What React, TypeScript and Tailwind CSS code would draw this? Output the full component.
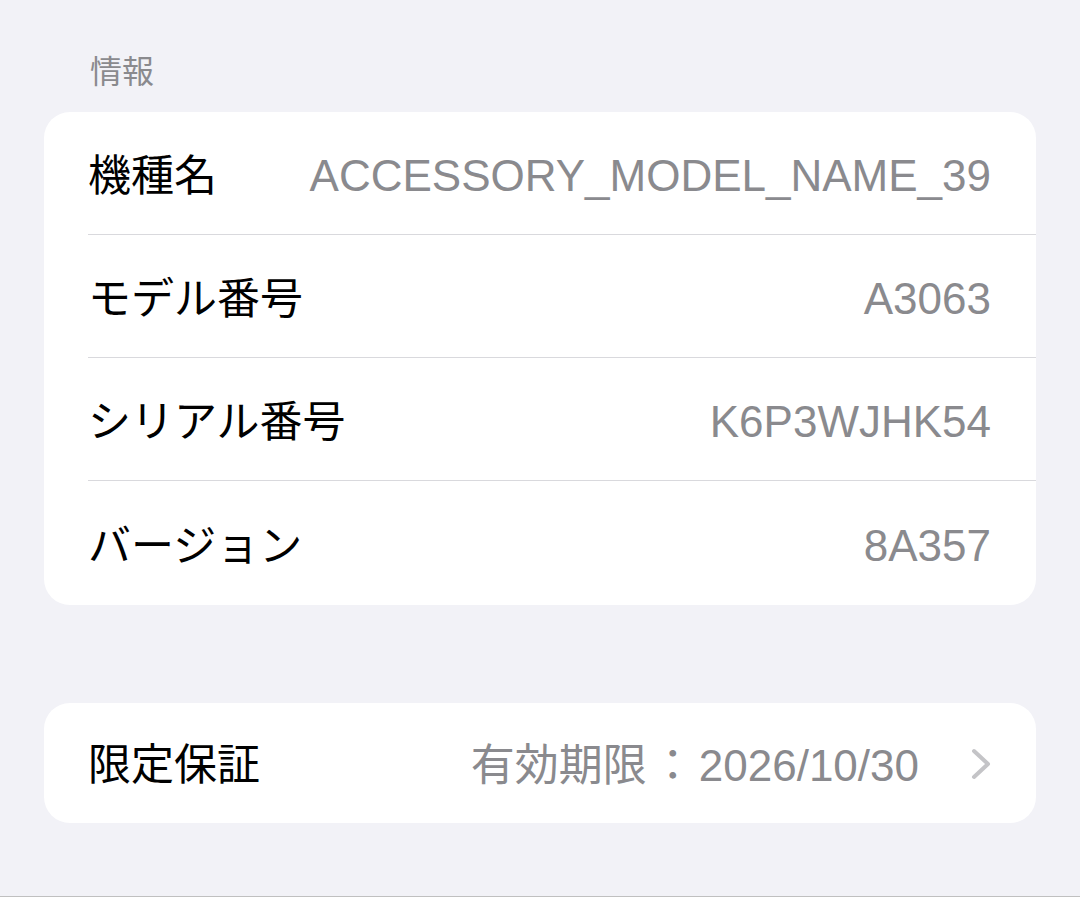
const font = { fontFamily: '"Liberation Sans", "Noto Sans CJK JP", sans-serif' };

const rows = [
  { label: '機種名', value: 'ACCESSORY_MODEL_NAME_39' },
  { label: 'モデル番号', value: 'A3063' },
  { label: 'シリアル番号', value: 'K6P3WJHK54' },
  { label: 'バージョン', value: '8A357' },
];

function Row({ label, value, last }: { label: string; value: string; last?: boolean }) {
  return (
    <div className="pl-[44px]">
      <div
        className={
          'flex items-center justify-between pt-[6px] pr-[45px] ' +
          (last ? 'h-[124px]' : 'h-[123px] border-b border-[#d9d9dd]')
        }
      >
        <span className="text-[43px] text-black">{label}</span>
        <span className="text-[44px] text-[#8a8a8e]">{value}</span>
      </div>
    </div>
  );
}

export default function App() {
  return (
    <div className="h-[897px] w-[1080px] overflow-hidden border-b border-[#c0c0c0] bg-[#f2f2f7]" style={font}>
      <div className="px-[44px]">
        <div className="pl-[46px] pt-[52px] pb-[20px] text-[32px] leading-[40px] text-[#8a8a8e]">情報</div>

        <div className="rounded-[26px] bg-white">
          {rows.map((r, i) => (
            <Row key={r.label} label={r.label} value={r.value} last={i === rows.length - 1} />
          ))}
        </div>

        <div className="mt-[98px] flex h-[120px] items-center justify-between rounded-[26px] bg-white pt-[5px] pl-[44px] pr-[45px]">
          <span className="text-[43px] text-black">限定保証</span>
          <div className="flex items-center gap-[52px]">
            <span className="text-[44px] text-[#8a8a8e]">
              有効期限<span className="px-[4px]">：</span>2026/10/30
            </span>
            <svg width="20" height="32" viewBox="0 0 20 32" fill="none" className="-mt-[4px]">
              <path d="M3 3 L17 16 L3 29" stroke="#c4c4c7" strokeWidth="4" strokeLinecap="round" strokeLinejoin="round" />
            </svg>
          </div>
        </div>
      </div>
    </div>
  );
}
